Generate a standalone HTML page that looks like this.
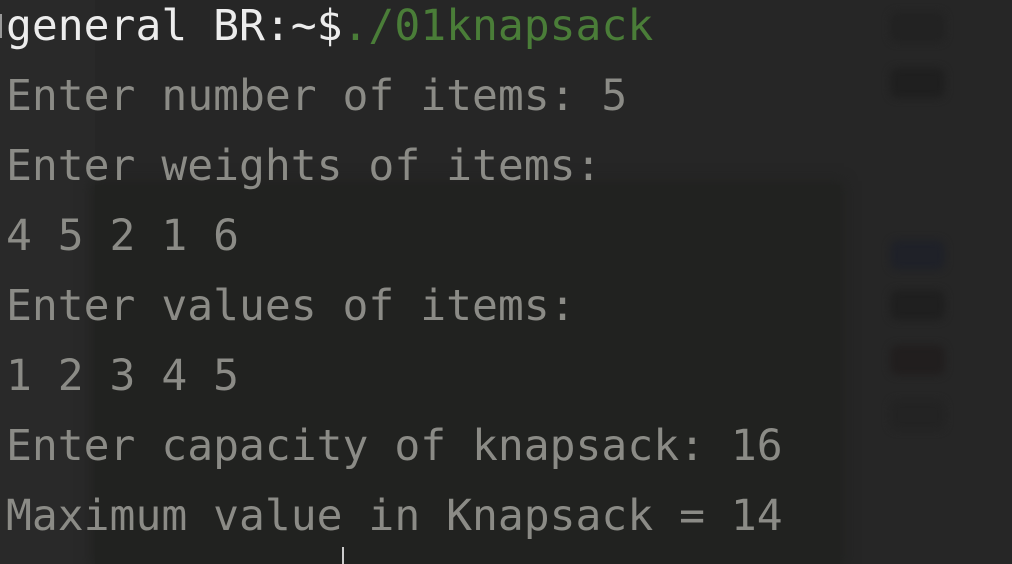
<!DOCTYPE html>
<html><head><meta charset="utf-8"><style>
html,body{margin:0;padding:0;}
body{width:1012px;height:564px;overflow:hidden;background:#262626;position:relative;
font-family:"DejaVu Sans Mono","Liberation Mono",monospace;}
.bg1{position:absolute;left:0;top:0;width:95px;height:564px;background:#292929;}
.panel{position:absolute;left:95px;top:185px;width:745px;height:379px;background:#212220;box-shadow:0 0 12px 4px #212220;}
.smudge{position:absolute;left:890px;width:55px;height:30px;border-radius:8px;background:#1f1f1f;filter:blur(4px);}
.t{position:absolute;left:6px;top:-9px;font-size:43px;line-height:70px;white-space:pre;color:#8b8b86;}
.w{color:#ececec;}
.g{color:#4a7d38;}
.bar{position:absolute;left:0;top:14px;width:2px;height:24px;background:#999;}
.cur{position:absolute;left:342px;top:547px;width:2px;height:17px;background:#ccc;}
</style></head><body>
<div class="bg1"></div>
<div class="panel"></div>
<div class="smudge" style="top:12px;background:#222"></div>
<div class="smudge" style="top:68px"></div>
<div class="smudge" style="top:240px;background:#1f2128"></div>
<div class="smudge" style="top:290px"></div>
<div class="smudge" style="top:345px;background:#211e1e"></div>
<div class="smudge" style="top:400px;background:#232323"></div>
<div class="bar"></div>
<div class="t"><span class="w">general BR:~$</span><span class="g">./01knapsack</span>
Enter number of items: 5
Enter weights of items:
4 5 2 1 6
Enter values of items:
1 2 3 4 5
Enter capacity of knapsack: 16
Maximum value in Knapsack = 14</div>
<div class="cur"></div>
</body></html>
